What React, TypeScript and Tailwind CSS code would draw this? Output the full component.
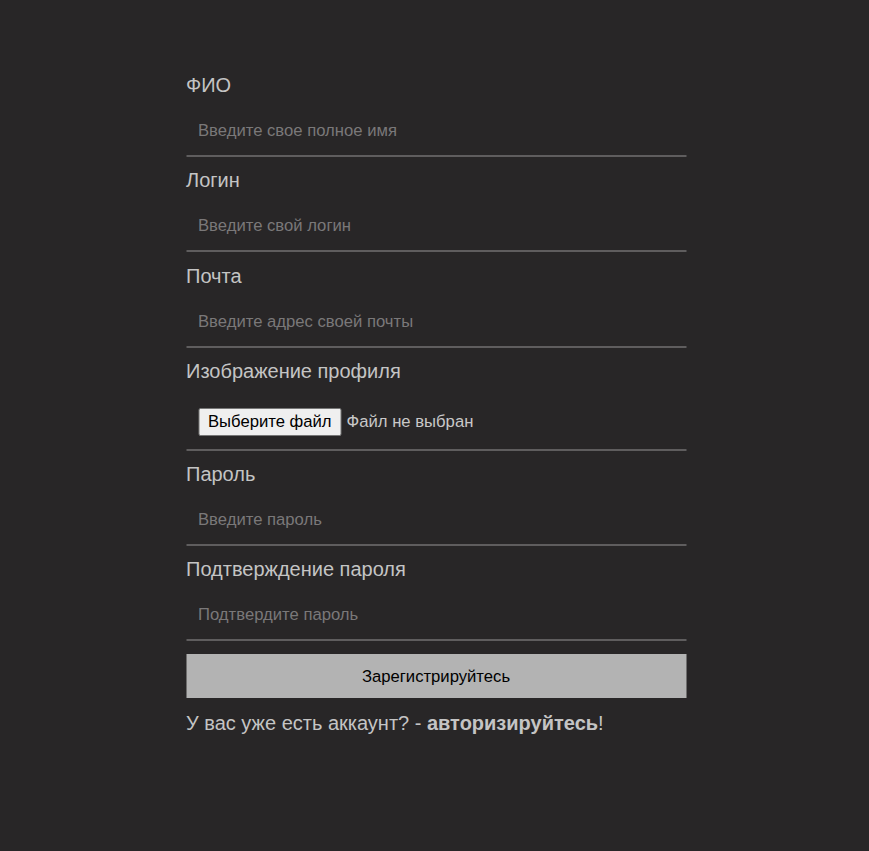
export default function App() {
  const fields = [
    { label: 'ФИО', placeholder: 'Введите свое полное имя', type: 'text', gap: 'mb-[9px]' },
    { label: 'Логин', placeholder: 'Введите свой логин', type: 'text', gap: 'mb-[10px]' },
    { label: 'Почта', placeholder: 'Введите адрес своей почты', type: 'email', gap: 'mb-[9px]' },
  ];
  const passwords = [
    { label: 'Пароль', placeholder: 'Введите пароль' },
    { label: 'Подтверждение пароля', placeholder: 'Подтвердите пароль' },
  ];

  const inputCls =
    'w-full bg-transparent border-0 border-b-2 border-[#5f5d5e] px-3 py-3 text-[16.67px] leading-6 text-[#c4c4c4] placeholder:text-[#7a7879] outline-none';

  return (
    <div className="min-h-[851px] bg-[#282627] font-['Liberation_Sans',Arial,sans-serif] text-[#c4c4c4]">
      <form className="mx-auto w-[500px] pt-[71px] translate-x-[1.5px] flex flex-col">
        {fields.map((f) => (
          <div key={f.label} className={`flex flex-col ${f.gap}`}>
            <label className="text-xl leading-7 mb-2">{f.label}</label>
            <input type={f.type} placeholder={f.placeholder} className={inputCls} />
          </div>
        ))}

        <div className="flex flex-col mb-[9px]">
          <label className="text-xl leading-7 mb-2">Изображение профиля</label>
          <div className="flex items-center border-b-2 border-[#5f5d5e] px-3 pt-[15px] pb-[13px]">
            <button
              type="button"
              className="h-7 px-[9px] bg-[#efefef] border border-[#767676] rounded-[2px] text-[16.67px] leading-5 text-black"
            >
              Выберите файл
            </button>
            <span className="ml-[5px] text-[16.67px] leading-6 text-[#c8c8c8]">Файл не выбран</span>
          </div>
        </div>

        {passwords.map((f) => (
          <div key={f.label} className="flex flex-col mb-[9px]">
            <label className="text-xl leading-7 mb-2">{f.label}</label>
            <input type="password" placeholder={f.placeholder} className={inputCls} />
          </div>
        ))}

        <button
          type="submit"
          className="mt-[4px] h-11 w-full bg-[#b3b3b3] text-[16.67px] text-black"
        >
          Зарегистрируйтесь
        </button>

        <p className="mt-[11px] text-xl leading-7">
          У вас уже есть аккаунт? - <b className="font-bold">авторизируйтесь</b>!
        </p>
      </form>
    </div>
  );
}
